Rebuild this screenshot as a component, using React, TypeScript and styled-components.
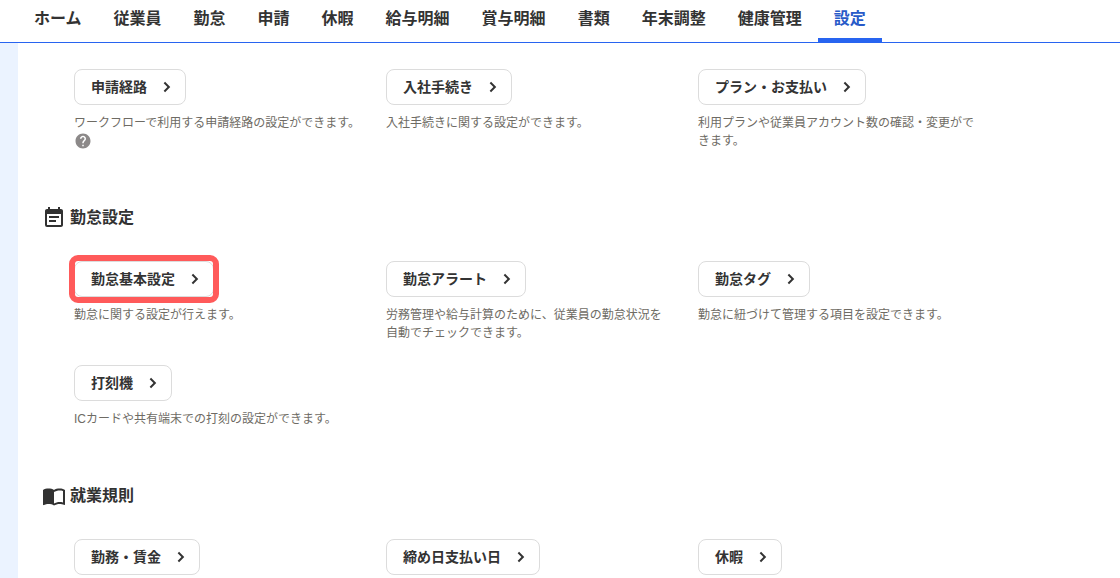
import React from "react";
import styled, { createGlobalStyle } from "styled-components";
import { MdHelp } from "react-icons/md";

const GlobalStyle = createGlobalStyle`
  *, *::before, *::after { box-sizing: border-box; }
  body {
    margin: 0;
    background: #fff;
    color: #333;
    font-family: "Liberation Sans", "Noto Sans CJK JP", sans-serif;
  }
`;

const Page = styled.div`
  display: flex;
  flex-direction: column;
  min-height: 100vh;
`;

const Header = styled.header`
  background: #fff;
  border-bottom: 1px solid #2864f0;
`;

const TabList = styled.nav`
  display: flex;
  padding: 0 18px;
`;

const Tab = styled.a<{ $active?: boolean }>`
  height: 42px;
  padding: 7px 16px 0;
  border-bottom: 4px solid ${(p) => (p.$active ? "#2864f0" : "transparent")};
  color: ${(p) => (p.$active ? "#285ac8" : "#333")};
  font-size: 16px;
  font-weight: 700;
  line-height: 24px;
  white-space: nowrap;
  text-decoration: none;
`;

const Body = styled.div`
  display: flex;
  flex: 1;
`;

const Gutter = styled.div`
  flex: none;
  width: 18px;
  background: #ebf3ff;
`;

const Main = styled.main`
  flex: 1;
  min-width: 0;
  padding: 26px 24px 0;
`;

const Section = styled.section`
  & + & {
    margin-top: 56px;
  }
`;

const SectionTitle = styled.h2`
  display: flex;
  align-items: center;
  gap: 4px;
  margin: 0 0 31px;
  color: #323232;
  font-size: 16px;
  font-weight: 700;
  line-height: 24px;
`;

const Grid = styled.div`
  display: grid;
  grid-template-columns: repeat(3, minmax(0, 1fr));
  gap: 23px 24px;
  max-width: 912px;
  margin-left: 32px;
`;

const Item = styled.div`
  display: flex;
  flex-direction: column;
  align-items: flex-start;
`;

const SettingButton = styled.button<{ $highlighted?: boolean }>`
  position: relative;
  display: inline-flex;
  align-items: center;
  gap: 10px;
  height: 36px;
  padding: 0 8px 0 16px;
  border: 1px solid #dcdcdc;
  border-radius: 8px;
  background: #fff;
  color: #333;
  font-family: inherit;
  font-size: 14px;
  font-weight: 700;
  line-height: 20px;
  white-space: nowrap;
  cursor: pointer;

  &::after {
    content: ${(p) => (p.$highlighted ? '""' : "none")};
    position: absolute;
    inset: -7px -6px;
    border: 6px solid #ff5a5a;
    border-radius: 9px;
    pointer-events: none;
  }
`;

const Description = styled.p<{ $fullWidth?: boolean }>`
  margin: 9px 0 0;
  padding-right: ${(p) => (p.$fullWidth ? "0" : "4px")};
  color: #6e6b64;
  font-size: 12px;
  line-height: 18px;
`;

const HelpButton = styled.button`
  display: flex;
  padding: 0;
  border: 0;
  background: none;
  color: #8c8989;
  cursor: pointer;
`;

const Chevron = () => (
  <svg width="20" height="20" viewBox="0 0 24 24" fill="currentColor" aria-hidden="true">
    <path d="M9.7 5.8 8 7.5l4.5 4.5L8 16.500l1.700 1.700L15.900 12z" />
  </svg>
);

const ScheduleIcon = () => (
  <svg width="24" height="24" viewBox="0 0 24 24" fill="currentColor" aria-hidden="true">
    <path d="M17 10H7v2h10v-2zm2-7h-1V1h-2v2H8V1H6v2H5c-1.110 0-1.990.9-1.990 2L3 19a2 2 0 0 0 2 2h14c1.100 0 2-.9 2-2V5c0-1.100-.9-2-2-2zm0 16H5V8h14v11zm-5-5H7v2h7v-2z" />
  </svg>
);

const RuleBookIcon = () => (
  <svg width="24" height="24" viewBox="0 0 24 24" fill="currentColor" aria-hidden="true">
    <path d="M21 5c-1.110-.35-2.330-.5-3.500-.5-1.950 0-4.050.4-5.500 1.500-1.450-1.100-3.550-1.500-5.500-1.500S2.450 4.900 1 6v14.650c0 .25.25.5.5.5.1 0 .150-.05.250-.05C3.100 20.450 5.050 20 6.500 20c1.950 0 4.050.4 5.500 1.500 1.350-.85 3.800-1.500 5.500-1.500 1.650 0 3.350.3 4.750 1.050.1.05.150.05.250.05.25 0 .5-.25.5-.5V6c-.6-.45-1.250-.75-2-1zm0 13.500c-1.100-.35-2.300-.5-3.500-.5-1.700 0-4.150.65-5.500 1.500V8c1.350-.85 3.800-1.500 5.500-1.500 1.200 0 2.400.150 3.500.5v11.500z" />
  </svg>
);

type Setting = {
  label: string;
  text?: string;
  help?: boolean;
  highlighted?: boolean;
};

type SettingGroup = {
  title?: string;
  icon?: React.ReactNode;
  settings: Setting[];
};

const tabs = [
  "ホーム",
  "従業員",
  "勤怠",
  "申請",
  "休暇",
  "給与明細",
  "賞与明細",
  "書類",
  "年末調整",
  "健康管理",
  "設定",
];

const groups: SettingGroup[] = [
  {
    settings: [
      {
        label: "申請経路",
        text: "ワークフローで利用する申請経路の設定ができます。",
        help: true,
      },
      { label: "入社手続き", text: "入社手続きに関する設定ができます。" },
      {
        label: "プラン・お支払い",
        text: "利用プランや従業員アカウント数の確認・変更ができます。",
      },
    ],
  },
  {
    title: "勤怠設定",
    icon: <ScheduleIcon />,
    settings: [
      { label: "勤怠基本設定", text: "勤怠に関する設定が行えます。", highlighted: true },
      {
        label: "勤怠アラート",
        text: "労務管理や給与計算のために、従業員の勤怠状況を自動でチェックできます。",
      },
      { label: "勤怠タグ", text: "勤怠に紐づけて管理する項目を設定できます。" },
      { label: "打刻機", text: "ICカードや共有端末での打刻の設定ができます。" },
    ],
  },
  {
    title: "就業規則",
    icon: <RuleBookIcon />,
    settings: [{ label: "勤務・賃金" }, { label: "締め日支払い日" }, { label: "休暇" }],
  },
];

export default function App() {
  return (
    <Page lang="ja">
      <GlobalStyle />
      <Header>
        <TabList>
          {tabs.map((tab) => (
            <Tab
              key={tab}
              href="#"
              $active={tab === "設定"}
              aria-current={tab === "設定" ? "page" : undefined}
            >
              {tab}
            </Tab>
          ))}
        </TabList>
      </Header>
      <Body>
        <Gutter />
        <Main>
          {groups.map((group, index) => (
            <Section key={index}>
              {group.title && (
                <SectionTitle>
                  {group.icon}
                  {group.title}
                </SectionTitle>
              )}
              <Grid>
                {group.settings.map((setting) => (
                  <Item key={setting.label}>
                    <SettingButton type="button" $highlighted={setting.highlighted}>
                      {setting.label}
                      <Chevron />
                    </SettingButton>
                    {setting.text && (
                      <Description $fullWidth={setting.help}>{setting.text}</Description>
                    )}
                    {setting.help && (
                      <HelpButton type="button" aria-label="ヘルプ">
                        <MdHelp size={18} />
                      </HelpButton>
                    )}
                  </Item>
                ))}
              </Grid>
            </Section>
          ))}
        </Main>
      </Body>
    </Page>
  );
}
